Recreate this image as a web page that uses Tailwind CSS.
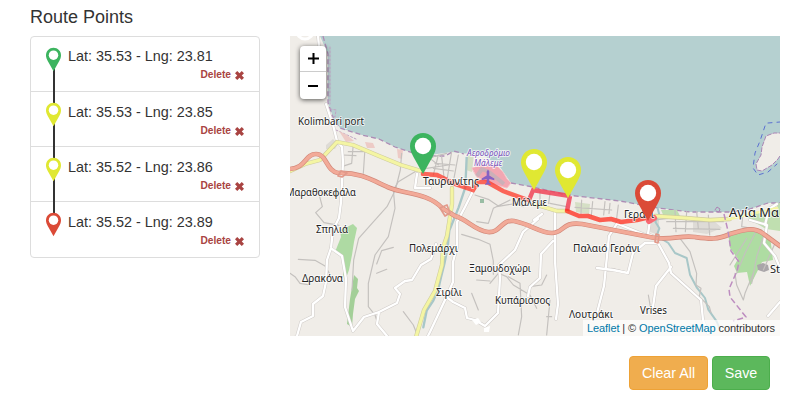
<!DOCTYPE html>
<html lang="en">
<head>
<meta charset="utf-8">
<title>Route Points</title>
<script src="https://cdn.jsdelivr.net/npm/@tailwindcss/browser@4"></script>
</head>
<body class="bg-white text-[#333] font-['Liberation_Sans',Arial,sans-serif] text-sm overflow-hidden">
<svg class="hidden">
  <symbol id="pin" viewBox="0 0 26 41"><path d="M13 0C5.800 0 0 5.800 0 13c0 4 1.600 7.500 3.500 11L13 41l9.500-17C24.400 20.500 26 17 26 13 26 5.800 20.200 0 13 0z"/><circle cx="13" cy="13" r="8.200" fill="#fff"/></symbol>
  <symbol id="cross" viewBox="0 0 10 10"><path d="M2.500 0 5 2.500 7.500 0 10 2.500 7.500 5 10 7.500 7.500 10 5 7.500 2.500 10 0 7.500 2.500 5 0 2.500z"/></symbol>
</svg>
<main class="flex flex-col w-[810px] h-[417px] pl-[30px] pr-[30px]">
  <div class="flex gap-[30px] h-[336px]">
    <section class="w-[230px] pt-[7px]">
      <h4 class="text-[18px] leading-5 mb-[9px]">Route Points</h4>
      <div class="relative">
      <ul class="border border-[#ddd] rounded h-[222px] grid grid-rows-4 divide-y divide-[#ddd]">
        <li class="flex px-[15px] pt-[9px]"><svg class="w-[15px] h-[25px] mt-px mr-[7px] relative z-10 fill-[#3cb45f]"><use href="#pin"/></svg><div class="flex-1"><p class="leading-5 text-[14.4px] whitespace-nowrap">Lat: 35.53 - Lng: 23.81</p><p class="flex justify-end items-center gap-1 pt-px text-[10.2px] font-bold leading-4 text-[#a94442]">Delete <svg class="w-[9px] h-[9px] fill-current"><use href="#cross"/></svg></p></div></li>
        <li class="flex px-[15px] pt-[10px]"><svg class="w-[15px] h-[25px] mr-[7px] relative z-10 fill-[#e0e832]"><use href="#pin"/></svg><div class="flex-1"><p class="leading-5 text-[14.4px] whitespace-nowrap">Lat: 35.53 - Lng: 23.85</p><p class="flex justify-end items-center gap-1 pt-px text-[10.2px] font-bold leading-4 text-[#a94442]">Delete <svg class="w-[9px] h-[9px] fill-current"><use href="#cross"/></svg></p></div></li>
        <li class="flex px-[15px] pt-[10px]"><svg class="w-[15px] h-[25px] mr-[7px] relative z-10 fill-[#e0e832]"><use href="#pin"/></svg><div class="flex-1"><p class="leading-5 text-[14.4px] whitespace-nowrap">Lat: 35.52 - Lng: 23.86</p><p class="flex justify-end items-center gap-1 pt-px text-[10.2px] font-bold leading-4 text-[#a94442]">Delete <svg class="w-[9px] h-[9px] fill-current"><use href="#cross"/></svg></p></div></li>
        <li class="flex px-[15px] pt-[10px]"><svg class="w-[15px] h-[25px] mr-[7px] relative z-10 fill-[#db4a37]"><use href="#pin"/></svg><div class="flex-1"><p class="leading-5 text-[14.4px] whitespace-nowrap">Lat: 35.52 - Lng: 23.89</p><p class="flex justify-end items-center gap-1 pt-px text-[10.2px] font-bold leading-4 text-[#a94442]">Delete <svg class="w-[9px] h-[9px] fill-current"><use href="#cross"/></svg></p></div></li>
      </ul>
      <div class="absolute left-[23px] top-[33px] w-[2px] h-[150px] bg-[#333]"></div>
      </div>
    </section>
    <section class="relative w-[490px] h-[300px] mt-[36px] overflow-hidden bg-[#f0ede8]">
      <svg class="block w-[490px] h-[300px]" viewBox="290 36 490 300" fill="none" stroke-linecap="round" stroke-linejoin="round">
        <defs>
          <path id="streets-west" d="M318 36l1 10M326 104l7 21 4 16M337 141l5 6 1 15-2 40-2 16-6 12-2 18-4 12-1 22-3 14-10 8 0 12-12 6-4 14-6 5-9-2M332 249l10 7 4 23-1 28 8 24M353 331l11-14 15-5 18-9 3-9-5-6 10-7 7-1 9-15 10-6 5-15M379 312l-2 12 10 12M417 174l-2 14 15 0M538 219l-15 13-8 18-16 15 1 13-2 35-13 13-10-6-8-2-2-10-12-6-13-10M475 187l-10 20-8 15 0 25-4 15 0 20-8 18-15 32-5 10"/>
          <path id="streets-east" d="M555 211l0 50 3 43-2 15M553 241l-12 13-1 24-10 9-2 9M534 220l8-6M618 222l-9 14-5 50-7 27M597 268l16 2 15 3 5-20 12-10 12 0M618 224l30 12M650 220l-2 14 11 5M658 243l11 20 2 10 20 18 10 9 2 20 5 13M671 267l-15 19-3 21M750 220l17 5-3 18 11 13 5 12M780 302l-12 14M765 225l4-16 8-5"/>
          <path id="secondary" d="M290 171l15-7 15-4 17-18 16 3 26 11 22 9 20 6M452 188l0 16-5 32-4 12-1 17-7 26-11 19-8 27M534 204l13 4 10 3 11 0M655 216l30 2 25 2 20-1"/>
          <path id="motorway" d="M290 169C306 168 305 154 316 154S326 171 338 173C362 172 375 182 390 188S428 193 442 208L455 216C467 219 475 231 488 232S501 219 514 221C530 224 540 233 552 233S562 221 582 224L655 238C675 240 680 235 695 237S717 240 730 234C742 231 753 225 765 235L780 246"/>
        </defs>
        <!-- sea -->
        <path fill="#b5d0d0" d="M320 36 328 54V103L334 120 340 128 362 135 379 139 395 147 422 156 452 152 470 154 485 156 500 167 511 183 533 187 567 195 620 201 658 208 690 212 730 212 747 210 768 203 780 203V36Z"/>
        <path stroke="#ad8cb5" stroke-width="1.300" stroke-dasharray="5 3" stroke-linecap="butt" d="M323 36 328 54V103L334 120 340 128 362 135 379 139 395 147 422 156 445 156 454 151 464 154M511 183 533 187 567 195 620 201 658 208 690 212 730 212 747 210 768 203 780 203"/>
        <path stroke="#c0a2c3" stroke-dasharray="2 2" d="M325 48v52M330 47v57m0 5 6 1-1 7-5-2M336 130l20 9"/>
        <!-- islet -->
        <path fill="#f0ede8" stroke="#aa85b5" stroke-dasharray="4 2" d="M783 133h-9l-8 3-4 11-1 8-5 9 1 6 5 1 10-6 6-6 5-8"/>
        <path stroke="#5b70d0" stroke-dasharray="4 5" d="M765 126l-5 15-5 12-2 15 5 7 10-3 9-8M768 123l12-1"/>
        <!-- forests and built-up areas -->
        <path fill="#aedaa3" d="M349 226 353 224 357 228 354 242 352 255 349 270 345 281 343 275V258L335 252 341 237 340 230Z"/>
        <path fill="#a3cf98" d="M354 275 358 279 357 288 359 291 355 299 353 314 352 327 347 324 350 299Z"/>
        <path fill="#aedca2" d="M728 232 741 229 760 229 770 236 773 260 762 262 756 274 750 286 747 272 737 273 734 266 738 259 730 248Z"/>
        <path fill="#c0dfb0" d="M661 210l16 0 3 6-16 1zM745 215l14-2 21-4v22l-14-2-14-8zM775 203l5 0v8z"/>
        <path fill="#d5dfc5" d="M466 153l8 0-2 19-6-2zM575 202l15 2-1 10-13-2z"/>
        <path fill="#f2a7b2" stroke="#f4c3c7" d="M472 168l8-3 16 0 7 7 4 7 4 4-4 5-15-4-15-7z"/>
        <path stroke="#cbb0b8" stroke-width="4" stroke-linecap="butt" d="M477 176 482 169 489 172 504 184"/>
        <path fill="#dedbd6" d="M326 145l7-6 5 5-3 5-9 0zM693 222l21-1 8 7-15 6-14-2zM650 220l9-1 0 16-12-4z"/>
        <path fill="#edcbc6" d="M339 131l8 4 7 6-8 1zM397 149l6 1-1 9-4-1zM365 142l8 1 2 5-8 0z"/>
        <path fill="#a9a5a9" d="M757 265l6-2 5 2 1 5-5 2-6-2z"/>
        <path fill="#99bda4" d="M480 199h4v4h-4z"/>

        <!-- streams and footpaths, western half -->
        <g transform="translate(290 120) scale(.33333)">
          <path stroke="#a8c7c8" stroke-width="7" d="M530 112l-4 90-20 60-28 70-5 50-10 50-10 40-8 35-15 35-20 30-10 50"/>
          <g stroke="#c4c1be" stroke-width="3.500">
            <path d="M158 105l40 2M225 85l-5 75M335 100l-4 50-15 60-25 50-45 50-40 45-15 65-5 90"/>
            <path d="M375 155l-50 30-15 25 5 55-20 85-40 55-20 85 0 70 20 25 8 25M310 382l-35 10-15 40M290 448l-30 12M130 215l-45 0 12 45-20 18 25 30 45 8M25 418l50 3 30 17 15 25M0 460l15 10 15 20 30 5M340 575l30 40 12 30M515 343l50 15 35 15 10 50 0 40M400 130l30-20 40-10M410 145l65-10M445 105l-15 60M485 95l-15 90M505 105l-15 80M555 225l40 13 30 20M660 240l-50 25-15 45-35-5M620 260l60-10 20 10M560 480l40 3M600 490l25-30 25 10 20 25 50 30 20 40M655 470l35 20 5 100-10 55"/>
            <path d="M175 95l45 0M190 70l-5 60-30 10M435 130l60 5M430 145l60 8M420 115l25 20M455 110l8 70M545 520l20 50"/>
          </g>
        </g>
        <!-- footpaths and streams, eastern half -->
        <g transform="translate(530 120) scale(.33333)">
          <path stroke="#a8c7c8" stroke-width="6" d="M383 265l5 20-12 20 12 20-8 22 35 22 20 30 35 15 10 50 20 38 25 32 10 35 25 35 8 20"/>
          <g stroke="#c4c1be" stroke-width="3.500">
            <path d="M155 240l-2 40M188 245l-4 42M225 245l-4 40M135 262l110 8M30 215l0 40M60 220l-4 30M265 255l-5 40M375 300l40-5M435 270l3 65M470 275l-4 60M500 275l5 50M535 285l4 60M410 305l170 0M430 325l140 3M450 355l30 40 20 65-2 35 15 10-5 25 30 30 5 18M285 455l-40-10M355 525l6 35M0 500l35-5 15-30M60 250l50 10M60 540l-10 105M65 590l-15 0M615 460l5 35 20 45 5-20 25-60M680 330l-35 70-25 60M700 350l-20 60-15 80M735 370l-35 80M650 355l-50 80M640 270l-5 50 60 10M240 250l-3 30"/>
          </g>
        </g>

        <!-- streets: grey casing under white fill -->
        <g stroke="#d0ccc9" stroke-width="3.300"><use href="#streets-west"/><use href="#streets-east"/></g>
        <g stroke="#fff" stroke-width="2.300"><use href="#streets-west"/><use href="#streets-east"/></g>
        <circle cx="305" cy="31" r="8" stroke="#fff" stroke-width="3"/>
        <path fill="#fff" d="M472 320l6-2 3 4-5 3zM484 328l6-2-1 6-5 0z"/>
        <use href="#secondary" stroke="#cfcc9e" stroke-width="4.300"/>
        <use href="#secondary" stroke="#f4f5a3" stroke-width="3.100"/>
        <path stroke="#f4f5a3" stroke-width="2.500" d="M730 219l25-6 22-5"/>
        <use href="#motorway" stroke="#d28879" stroke-width="4.700"/>
        <use href="#motorway" stroke="#f2aa98" stroke-width="3.400"/>
        <path stroke="#e29a8b" stroke-width="1.700" d="M341 171l6 2-5 4-4-1zM440 208l7-3 3 8-5 3zM656 234l3 1-1 8-3-1z"/>
        <!-- district boundaries -->
        <path stroke="#bd8dc0" stroke-width="1.500" stroke-dasharray="6 3" stroke-linecap="butt" d="M724 214l4 17 3 20 8 11-2 9-8 18 1 8 16 20-13 4"/>
        <path stroke="#ac83b4" d="M715 210l2-3 3 2-1 3-3-1"/>
        <!-- planned route -->
        <path stroke="#ff3020" stroke-opacity=".72" stroke-width="4.500" stroke-linejoin="miter" d="M423 174l14 1 18 9 18 6 5-8 9 0 16 9 25 9"/>
        <path stroke="#f04458" stroke-opacity=".85" stroke-width="4.500" stroke-linecap="butt" d="M529 200l5-12M532 190l38 6M570 196l-3 15"/>
        <path stroke="#ff3020" stroke-opacity=".77" stroke-width="4.500" d="M567 211l12 5 9 0 12 4 11-1 10 3 16-2 13-3"/>
        <path stroke="#f96872" stroke-width="6" d="M649 221l5-3"/>
        <!-- aerodrome -->
        <path fill="#8661c3" d="M488 169.500l1.300 2v4l5 3v1.700l-5-1.200v3.500l1.500 1.500v1l-2.800-.6-2.800.6v-1l1.500-1.500v-3.500l-5 1.200v-1.700l5-3v-4z"/>
        <!-- place names -->
        <g class="font-['Noto_Sans',sans-serif]" fill="#222" stroke="#fff" stroke-opacity=".7" stroke-width="2" paint-order="stroke" font-size="11">
          <text x="298" y="125" textLength="66" lengthAdjust="spacingAndGlyphs">Kolimbari port</text>
          <text x="286" y="196" textLength="70" lengthAdjust="spacingAndGlyphs">Μαραθοκεφάλα</text>
          <text x="316" y="233" textLength="32" lengthAdjust="spacingAndGlyphs">Σπηλιά</text>
          <text x="302" y="282" textLength="41" lengthAdjust="spacingAndGlyphs">Δρακόνα</text>
          <text x="409" y="252" textLength="49" lengthAdjust="spacingAndGlyphs">Πολεμάρχι</text>
          <text x="436" y="296" textLength="26" lengthAdjust="spacingAndGlyphs">Σιρίλι</text>
          <text x="423" y="185" textLength="56" lengthAdjust="spacingAndGlyphs">Ταυρωνίτης</text>
          <text x="512" y="206" textLength="35" lengthAdjust="spacingAndGlyphs">Μάλεμε</text>
          <text x="469" y="272" textLength="62" lengthAdjust="spacingAndGlyphs">Ξαμουδοχώρι</text>
          <text x="495" y="304" textLength="55" lengthAdjust="spacingAndGlyphs">Κυπάρισσος</text>
          <text x="573" y="252" textLength="67" lengthAdjust="spacingAndGlyphs">Παλαιό Γεράνι</text>
          <text x="569" y="318" textLength="44" lengthAdjust="spacingAndGlyphs">Λουτράκι</text>
          <text x="624" y="218" textLength="30" lengthAdjust="spacingAndGlyphs">Γεράνι</text>
          <text x="640" y="314" textLength="27" lengthAdjust="spacingAndGlyphs">Vrises</text>
          <text x="770" y="273">St</text>
          <text x="729" y="217" font-size="13" textLength="50" lengthAdjust="spacingAndGlyphs">Αγία Μα</text>
          <g fill="#7a50bb" font-style="italic" font-size="8.500"><text x="467" y="156" textLength="43" lengthAdjust="spacingAndGlyphs">Αεροδρόμιο</text><text x="474" y="166" textLength="28" lengthAdjust="spacingAndGlyphs">Μάλεμε</text></g>
        </g>
        <use href="#pin" x="410" y="133" width="26" height="41" fill="#3cb45f"/>
        <use href="#pin" x="521" y="149" width="26" height="41" fill="#e0e832"/>
        <use href="#pin" x="555" y="157" width="26" height="41" fill="#e0e832"/>
        <use href="#pin" x="635" y="180" width="26" height="41" fill="#db4a37"/>
      </svg>
      <div class="absolute left-[10px] top-[10px] w-[26px] rounded bg-white shadow-[0_1px_5px_rgba(0,0,0,0.65)] divide-y divide-[#ccc]">
        <button class="flex w-[26px] h-[26px] items-center justify-center" aria-label="Zoom in"><svg class="w-[11px] h-[11px]" viewBox="0 0 11 11"><path d="M5.500 0v11M0 5.500h11" stroke="#000" stroke-width="2"/></svg></button>
        <button class="flex w-[26px] h-[27px] items-center justify-center" aria-label="Zoom out"><svg class="w-[10px] h-[2px]"><path d="M0 1h10" stroke="#000" stroke-width="2"/></svg></button>
      </div>
      <div class="absolute right-0 bottom-0 w-[197px] h-[16px] bg-white/70 pl-[4px] text-[11px] leading-4 tracking-[-0.09px] whitespace-nowrap"><span class="text-[#0078a8]">Leaflet</span> | © <span class="text-[#0078a8]">OpenStreetMap</span> contributors</div>
    </section>
  </div>
  <div class="flex justify-end gap-1 pt-[20px] pr-[10px] text-white">
    <button class="w-[79px] h-[34px] rounded border border-[#eea236] bg-[#f0ad4e] text-[14.3px]">Clear All</button>
    <button class="w-[58px] h-[34px] rounded border border-[#4cae4c] bg-[#5cb85c] text-[14.3px]">Save</button>
  </div>
</main>
</body>
</html>
